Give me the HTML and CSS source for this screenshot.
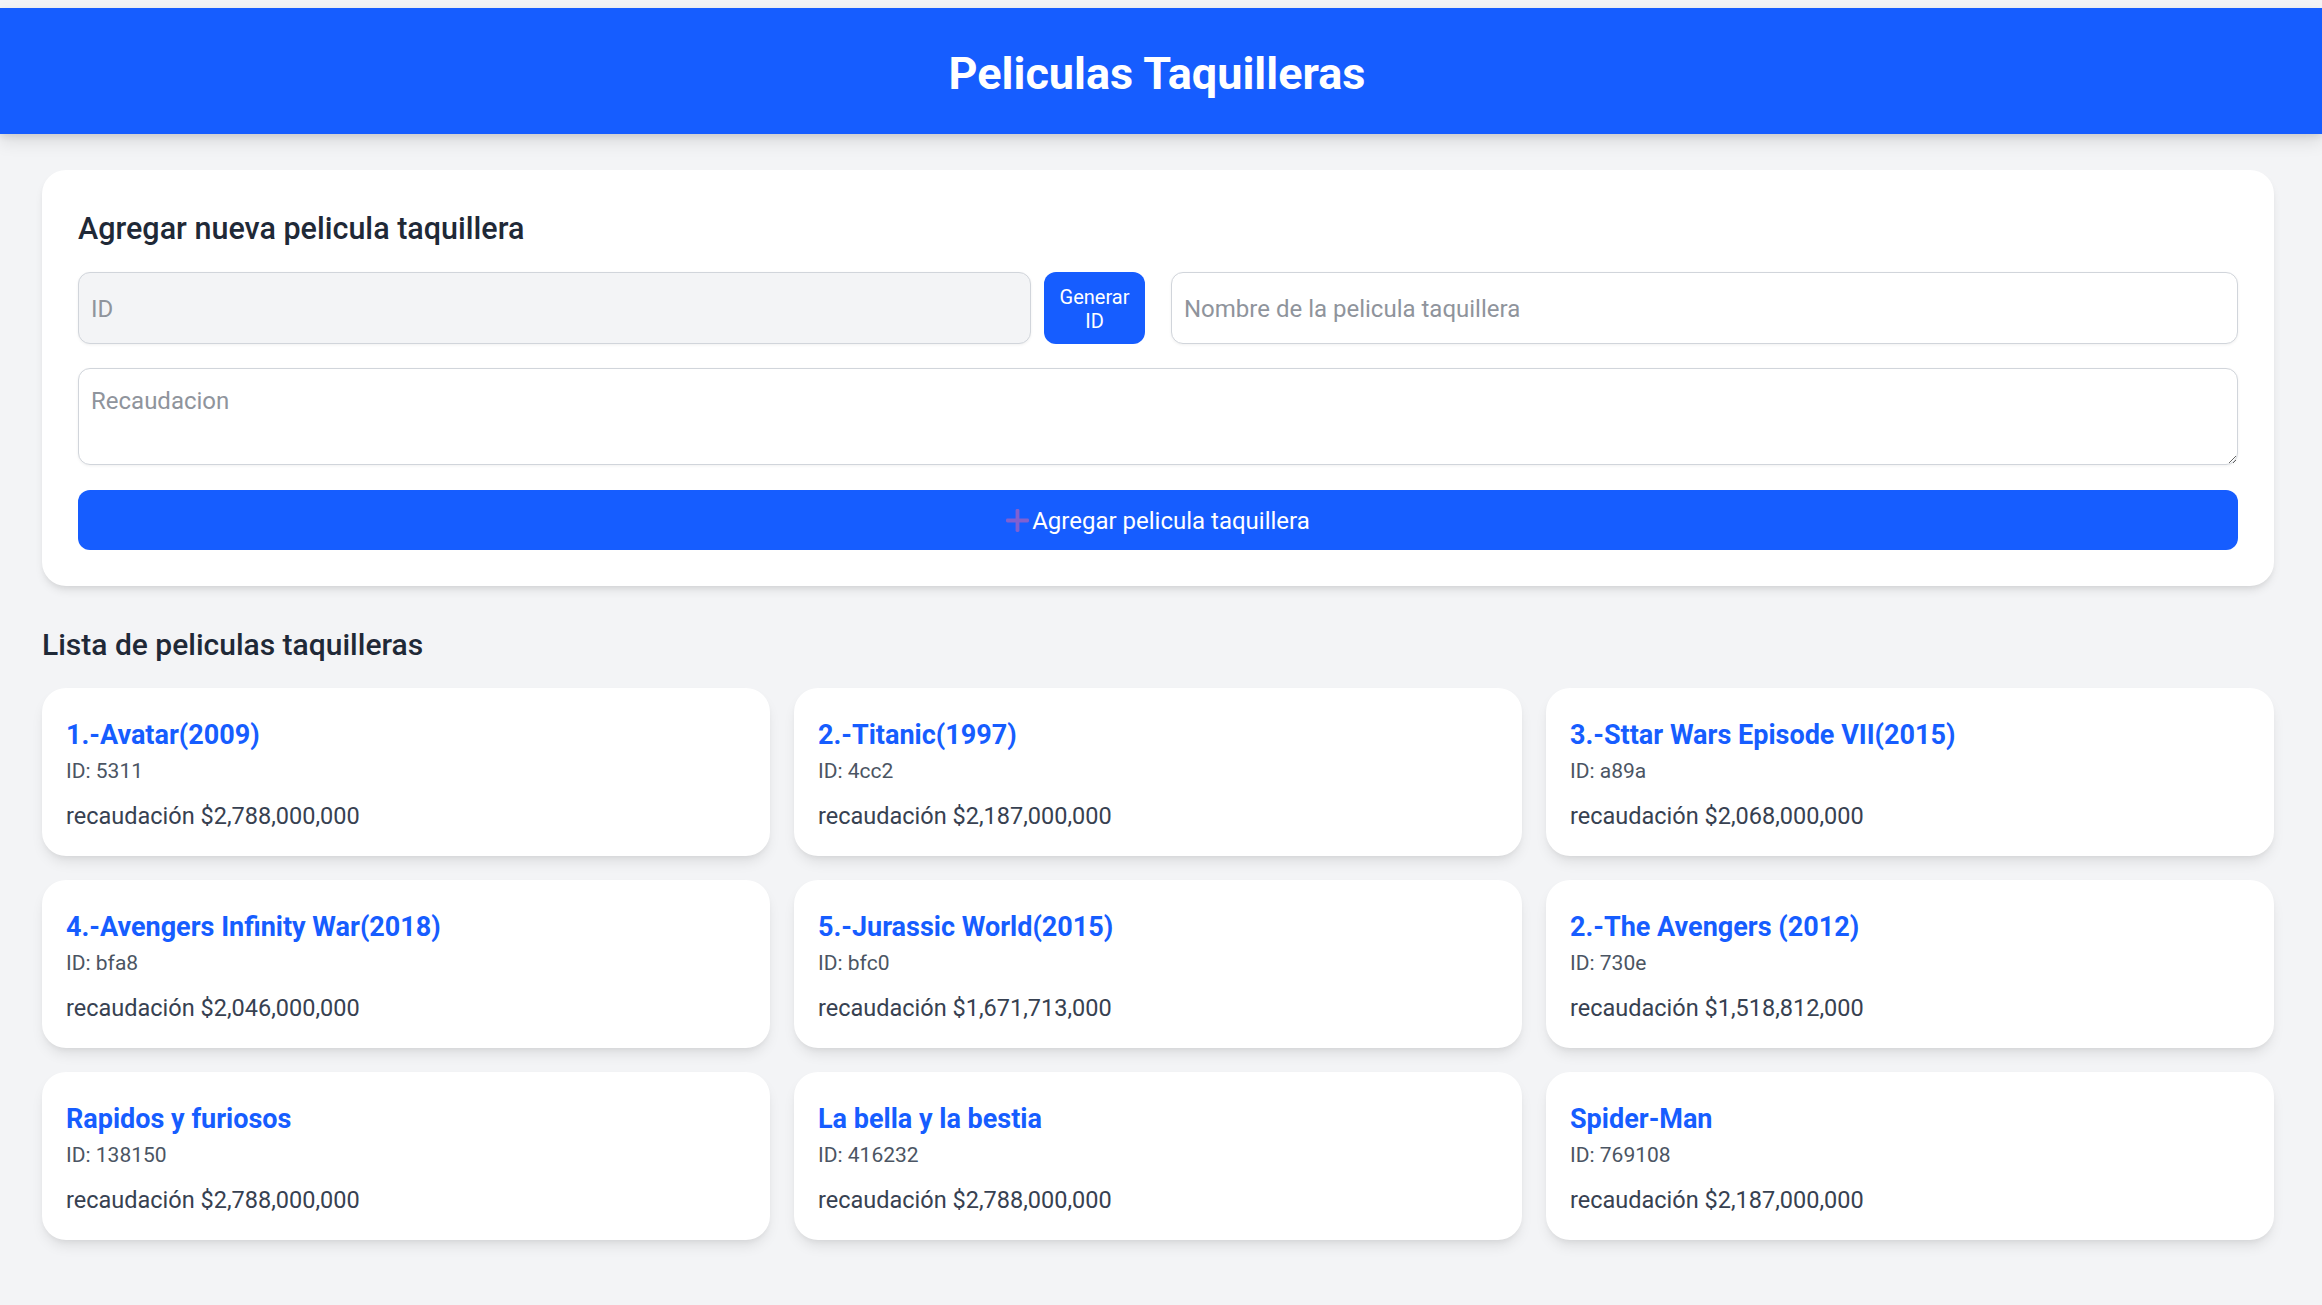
FILE: index.html
```html
<!DOCTYPE html>
<html lang="es">
<head>
<meta charset="utf-8">
<title>Peliculas Taquilleras</title>
<link rel="stylesheet" href="styles.css">
</head>
<body>
<header class="topbar">
  <h1 class="topbar-title">Peliculas Taquilleras</h1>
</header>
<main class="main">
  <section class="form-card">
    <h2 class="form-title">Agregar nueva pelicula taquillera</h2>
    <div class="form-row">
      <div class="id-group">
        <input class="field field-id" type="text" placeholder="ID" readonly>
        <button class="btn-gen" type="button">Generar ID</button>
      </div>
      <input class="field" type="text" placeholder="Nombre de la pelicula taquillera">
    </div>
    <textarea class="field field-area" placeholder="Recaudacion"></textarea>
    <button class="btn-add" type="button">
      <svg class="plus" viewBox="0 0 24 24" width="23" height="23" aria-hidden="true"><rect x="10" y="0" width="4" height="24" rx="1.5"/><rect x="0" y="10" width="24" height="4" rx="1.5"/></svg>
      <span>Agregar pelicula taquillera</span>
    </button>
  </section>

  <h2 class="list-title">Lista de peliculas taquilleras</h2>
  <div class="grid">
    <article class="movie"><h3 class="movie-name">1.-Avatar(2009)</h3><p class="movie-id">ID: 5311</p><p class="movie-rev">recaudación $2,788,000,000</p></article>
    <article class="movie"><h3 class="movie-name">2.-Titanic(1997)</h3><p class="movie-id">ID: 4cc2</p><p class="movie-rev">recaudación $2,187,000,000</p></article>
    <article class="movie"><h3 class="movie-name">3.-Sttar Wars Episode VII(2015)</h3><p class="movie-id">ID: a89a</p><p class="movie-rev">recaudación $2,068,000,000</p></article>
    <article class="movie"><h3 class="movie-name">4.-Avengers Infinity War(2018)</h3><p class="movie-id">ID: bfa8</p><p class="movie-rev">recaudación $2,046,000,000</p></article>
    <article class="movie"><h3 class="movie-name">5.-Jurassic World(2015)</h3><p class="movie-id">ID: bfc0</p><p class="movie-rev">recaudación $1,671,713,000</p></article>
    <article class="movie"><h3 class="movie-name">2.-The Avengers (2012)</h3><p class="movie-id">ID: 730e</p><p class="movie-rev">recaudación $1,518,812,000</p></article>
    <article class="movie"><h3 class="movie-name">Rapidos y furiosos</h3><p class="movie-id">ID: 138150</p><p class="movie-rev">recaudación $2,788,000,000</p></article>
    <article class="movie"><h3 class="movie-name">La bella y la bestia</h3><p class="movie-id">ID: 416232</p><p class="movie-rev">recaudación $2,788,000,000</p></article>
    <article class="movie"><h3 class="movie-name">Spider-Man</h3><p class="movie-id">ID: 769108</p><p class="movie-rev">recaudación $2,187,000,000</p></article>
  </div>
</main>
</body>
</html>
```

FILE: styles.css
```css
* { box-sizing: border-box; }

body {
  margin: 0;
  padding-top: 8px;
  background: #f3f4f6;
  font-family: Roboto, "Open Sans", "Liberation Sans", sans-serif;
  color: #1f2937;
}

.topbar {
  height: 126px;
  background: #165dff;
  display: flex;
  align-items: center;
  justify-content: center;
  box-shadow: 0 8px 16px rgba(0, 0, 0, 0.10), 0 3px 6px rgba(0, 0, 0, 0.08);
  position: relative;
}

.topbar-title {
  margin: 0;
  color: #ffffff;
  font-size: 45px;
  line-height: 54px;
  font-weight: 700;
  padding-right: 8px;
  padding-top: 6px;
}

.main {
  padding: 36px 48px 40px 42px;
}

.form-card {
  background: #ffffff;
  border-radius: 24px;
  padding: 36px;
  box-shadow: 0 6px 10px -2px rgba(0, 0, 0, 0.10), 0 3px 6px -3px rgba(0, 0, 0, 0.08);
}

.form-title {
  margin: 0 0 24px;
  font-size: 30.5px;
  line-height: 42px;
  font-weight: 500;
  color: #1f2937;
  padding-top: 2px;
  height: 42px;
}

.form-row {
  display: grid;
  grid-template-columns: 1fr 1fr;
  gap: 26px;
}

.id-group {
  display: flex;
  gap: 13px;
}

.field {
  width: 100%;
  height: 72px;
  border: 1.5px solid #d1d5db;
  border-radius: 12px;
  padding: 2px 12px 0;
  font-family: inherit;
  font-size: 24px;
  color: #1f2937;
  background: #ffffff;
  box-shadow: 0 1px 3px rgba(0, 0, 0, 0.06);
  outline: none;
}

.field::placeholder { color: #8f949c; }

.field-id {
  flex: 1;
  background: #f3f4f6;
}

.btn-gen {
  flex: 0 0 101px;
  height: 72px;
  border: 0;
  border-radius: 12px;
  background: #165dff;
  color: #ffffff;
  font-family: inherit;
  font-size: 20px;
  line-height: 24px;
  padding: 1px 10px 0;
}

.field-area {
  display: block;
  margin-top: 24px;
  height: 97px;
  padding: 14px 12px;
  line-height: 36px;
  resize: vertical;
}

.btn-add {
  margin-top: 25px;
  width: 100%;
  height: 60px;
  border: 0;
  border-radius: 12px;
  background: #165dff;
  color: #ffffff;
  font-family: inherit;
  font-size: 24px;
  display: flex;
  align-items: center;
  justify-content: center;
  gap: 3px;
  padding-top: 2px;
}

.plus { fill: #8060d0; }

.list-title {
  margin: 38px 0 22px;
  font-size: 30px;
  line-height: 42px;
  font-weight: 500;
  color: #1f2937;
}

.grid {
  display: grid;
  grid-template-columns: repeat(3, 1fr);
  gap: 24px;
}

.movie {
  background: #ffffff;
  border-radius: 24px;
  padding: 26px 24px 22px;
  height: 168px;
  box-shadow: 0 8px 14px -3px rgba(0, 0, 0, 0.10), 0 3px 6px -3px rgba(0, 0, 0, 0.08);
}

.movie-name {
  margin: 0;
  font-size: 27px;
  line-height: 42px;
  font-weight: 700;
  color: #165dff;
}

.movie-id {
  margin: 0;
  font-size: 21px;
  line-height: 30px;
  color: #4b5563;
}

.movie-rev {
  margin: 12px 0 0;
  font-size: 23.5px;
  line-height: 36px;
  color: #374151;
}
```
